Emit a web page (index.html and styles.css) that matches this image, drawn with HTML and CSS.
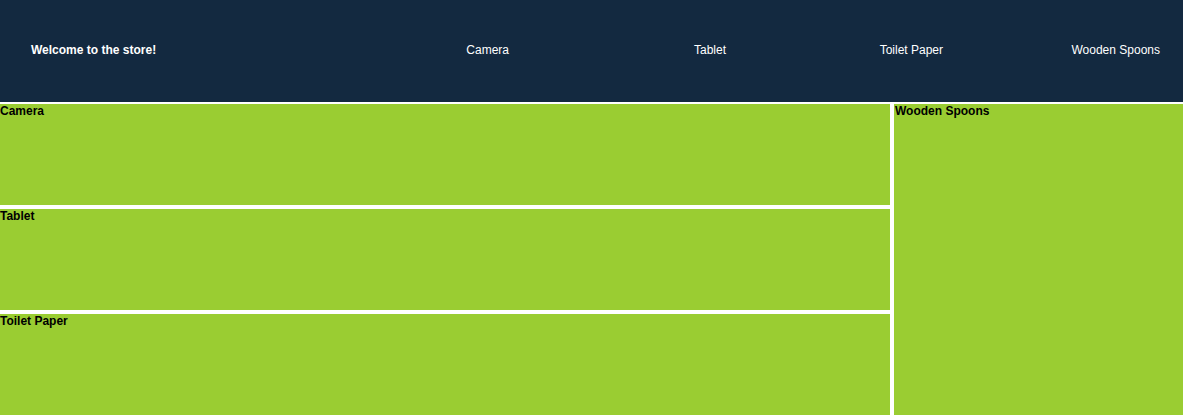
FILE: index.html
```html
<!DOCTYPE html>
<html>
<head>
<meta charset="utf-8">
<link rel="stylesheet" href="styles.css">
</head>
<body>
<header class="topbar">
  <div class="welcome">Welcome to the store!</div>
  <nav class="nav">
    <a class="nav-item">Camera</a>
    <a class="nav-item">Tablet</a>
    <a class="nav-item">Toilet Paper</a>
    <a class="nav-item">Wooden Spoons</a>
  </nav>
</header>
<main class="grid">
  <section class="box">Camera</section>
  <section class="box box-side">Wooden Spoons</section>
  <section class="box">Tablet</section>
  <section class="box">Toilet Paper</section>
</main>
</body>
</html>
```
FILE: styles.css
```css
html, body {
  margin: 0;
  padding: 0;
  background: #ffffff;
  font-family: "Liberation Sans", Arial, sans-serif;
  font-size: 12px;
  overflow: hidden;
}
.topbar {
  height: 102px;
  background: #132940;
  color: #ffffff;
  display: flex;
  align-items: center;
  padding: 0 23px 2px 31px;
  margin-bottom: 2px;
  box-sizing: border-box;
}
.welcome {
  flex: 1;
  font-weight: bold;
}
.nav {
  display: flex;
}
.nav-item {
  width: 217px;
  text-align: right;
  color: #ffffff;
}
.grid {
  display: grid;
  grid-template-columns: 890px 1fr;
  grid-template-rows: 101px 101px 101px;
  gap: 4px;
}
.box {
  background: #9acd32;
  color: #000000;
  font-weight: bold;
  line-height: 14px;
  grid-column: 1;
}
.box-side {
  grid-column: 2;
  grid-row: 1 / span 3;
  padding-left: 1px;
}
```
